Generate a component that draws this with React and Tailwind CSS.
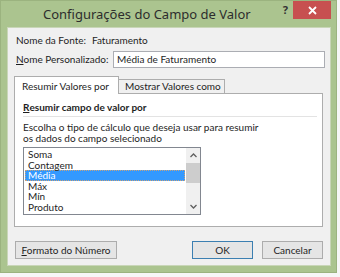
import React from "react";

const font = { fontFamily: '"Noto Sans", "Open Sans", sans-serif' };
const body = { fontFamily: 'Lato, "Noto Sans", sans-serif' };

function Chevron({ up }) {
  return (
    <svg width="7" height="5" viewBox="0 0 7 5">
      <path d={up ? "M0.5 4 L3.5 1 L6.5 4" : "M0.5 1 L3.5 4 L6.5 1"} fill="none" stroke="#606060" strokeWidth="1.3" />
    </svg>
  );
}

export default function App() {
  const items = ["Soma", "Contagem", "Média", "Máx", "Mín", "Produto"];
  return (
    <div className="w-[340px] h-[277px] bg-[#f7f7f7] text-[#1e1e1e]" style={font}>
      <div className="w-[337px] h-[273px] bg-[#abc48f] border border-[#9bb37f] flex flex-col pl-[6px] pr-[5px] pb-[6px]">
        <div className="h-[26px] flex items-start">
          <div className="flex-1 pl-[36px] pt-[5px] text-[13px] leading-[16px] text-[#2d2d2d] whitespace-nowrap">
            Configurações do Campo de Valor
          </div>
          <div className="pt-[3px] pr-[5px] text-[11px] font-bold leading-[12px] text-[#333]">?</div>
          <div className="w-[38px] h-[18px] bg-[#c75050] flex items-center justify-center">
            <svg width="9" height="9" viewBox="0 0 9 9">
              <path d="M1 1 L8 8 M8 1 L1 8" stroke="#fff" strokeWidth="1.8" />
            </svg>
          </div>
        </div>
        <div className="flex-1 bg-[#f0f0f0] border border-[#c9d6b8] text-[10px] leading-[13px] flex flex-col whitespace-nowrap" style={body}>
          <div className="pt-[6px] pl-[8px] flex">
            <span className="w-[76px]">Nome da Fonte:</span>
            <span>Faturamento</span>
          </div>
          <div className="mt-[4px] pl-[8px] pr-[5px] flex items-center">
            <span className="w-[97px]"><span className="underline">N</span>ome Personalizado:</span>
            <div className="flex-1 h-[17px] bg-white border border-[#abadb3] pl-[3px] flex items-center">
              Média de Faturamento
            </div>
          </div>
          <div className="mt-[8px] pl-[6px] flex items-end">
            <div className="w-[105px] h-[18px] bg-white border border-b-0 border-[#adadad] pl-[7px] pt-[3px] relative z-10 -mb-px">
              Resumir Valores por
            </div>
            <div className="w-[106px] h-[14px] bg-[#f0f0f0] border border-l-0 border-b-0 border-[#adadad] pl-[6px] leading-[13px]">
              Mostrar Valores como
            </div>
          </div>
          <div className="ml-[6px] mr-[7px] h-[134px] bg-white border border-[#adadad] pl-[8px] pr-[5px] flex flex-col">
            <div className="mt-[7px] font-bold flex items-center">
              <span className="underline">R</span>esumir campo de valor por
            </div>
            <div className="mt-[2px] h-px bg-[#e3e3e3]" />
            <div className="mt-[5px] leading-[11px]">
              Escolha o tipo de cálculo que deseja usar para resumir
              <br />
              os dados do campo selecionado
            </div>
            <div className="mt-[3px] w-[178px] h-[68px] border border-[#828790] flex">
              <div className="flex-1 pt-[1px] pl-px pr-px">
                {items.map((it) => (
                  <div
                    key={it}
                    className={
                      it === "Média"
                        ? "h-[10.6px] leading-[9px] pl-[2px] bg-[#3399ff] text-white border border-dotted border-[#c9a27a]"
                        : "h-[10.6px] leading-[10.6px] pl-[3px]"
                    }
                  >
                    {it}
                  </div>
                ))}
              </div>
              <div className="w-[14px] bg-[#f0f0f0] flex flex-col items-center">
                <div className="h-[15px] flex items-center justify-center"><Chevron up /></div>
                <div className="w-[14px] h-[20px] bg-[#cdcdcd]" />
                <div className="flex-1" />
                <div className="h-[15px] flex items-center justify-center"><Chevron /></div>
              </div>
            </div>
          </div>
          <div className="mt-[14px] px-[7px] flex items-center relative">
            <div className="w-[102px] h-[18px] bg-[#e5e5e5] border border-[#acacac] flex items-center justify-center">
              <span><span className="underline">F</span>ormato do Número</span>
            </div>
            <div className="flex-1" />
            <div className="w-[61px] h-[18px] bg-[#e5e5e5] border border-[#3c7fb1] flex items-center justify-center">OK</div>
            <div className="ml-[9px] w-[61px] h-[18px] bg-[#e5e5e5] border border-[#acacac] flex items-center justify-center">Cancelar</div>
          </div>
        </div>
      </div>
    </div>
  );
}
